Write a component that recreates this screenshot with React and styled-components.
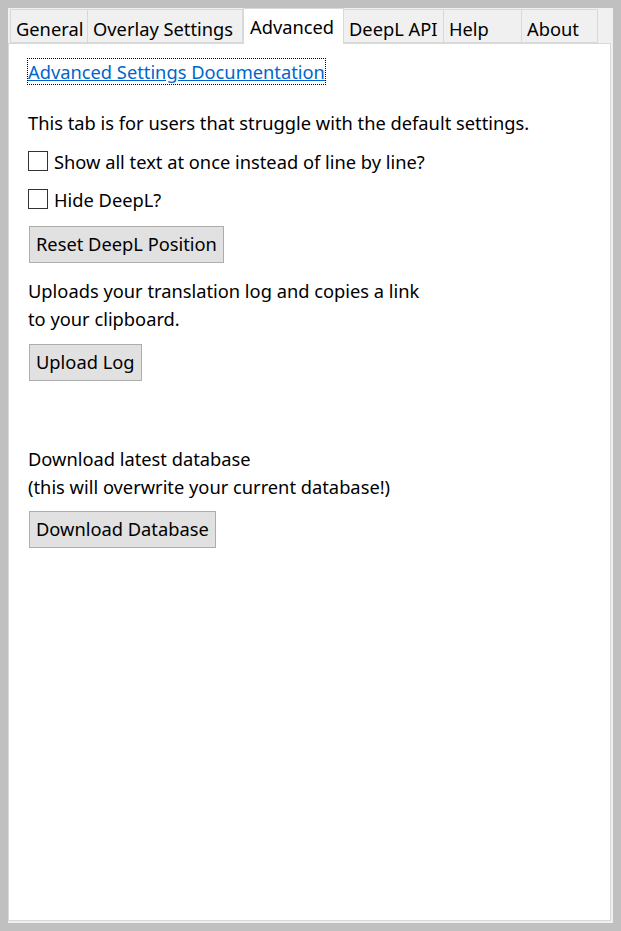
import React, { useState } from "react";
import styled, { createGlobalStyle } from "styled-components";

const GlobalStyle = createGlobalStyle`
  html, body {
    margin: 0;
    padding: 0;
    background: #c0c0c0;
  }
  body {
    font-family: "Noto Sans", "Open Sans", sans-serif;
  }
`;

const Frame = styled.div`
  width: 621px;
  height: 931px;
  box-sizing: border-box;
  padding: 8px;
  background: #c0c0c0;
`;

const Window = styled.div`
  height: 100%;
  background: #f0f0f0;
  display: flex;
  flex-direction: column;
  padding: 0 2px 2px 0;
  box-sizing: border-box;
`;

const TabBar = styled.div`
  display: flex;
  align-items: flex-end;
  height: 35px;
  padding-left: 2px;
`;

const Tab = styled.button`
  font-family: inherit;
  font-size: 18.3px;
  color: #000;
  height: ${(p) => (p.$active ? "36px" : "34px")};
  width: ${(p) => p.$w}px;
  margin-bottom: ${(p) => (p.$active ? "-1px" : "0")};
  background: ${(p) => (p.$active ? "#fff" : "#f0f0f0")};
  border: 1px solid #d9d9d9;
  border-bottom: ${(p) => (p.$active ? "none" : "1px solid #d9d9d9")};
  border-left: ${(p) => (p.$first || p.$active ? "1px solid #d9d9d9" : "none")};
  padding: ${(p) => (p.$active ? "0 0 1px 6px" : "4px 0 0 5px")};
  text-align: left;
  position: relative;
  z-index: ${(p) => (p.$active ? 1 : 0)};
  cursor: default;
`;

const Panel = styled.div`
  flex: 1;
  background: #fff;
  border: 1px solid #d9d9d9;
  padding: 15px 20px 0 19px;
  display: flex;
  flex-direction: column;
  align-items: flex-start;
`;

const DocLink = styled.a`
  font-size: 18.3px;
  color: #0066cc;
  text-decoration: underline;
  outline: 1px dotted #000;
  line-height: 25px;
`;

const Text = styled.p`
  margin: ${(p) => p.$mt || 0}px 0 0 0;
  font-size: 18.3px;
  line-height: 28.5px;
  color: #000;
`;

const CheckRow = styled.label`
  display: flex;
  align-items: center;
  gap: 6px;
  font-size: 18.3px;
  line-height: 28px;
  margin-top: ${(p) => p.$mt || 0}px;
`;

const Box = styled.span`
  width: 18px;
  height: 18px;
  border: 1px solid #333;
  background: #fff;
  display: inline-block;
  margin-top: -2px;
`;

const Button = styled.button`
  font-family: inherit;
  font-size: 18.3px;
  color: #000;
  background: #e1e1e1;
  border: 1px solid #adadad;
  height: 37px;
  padding: 0 6px 2px 6px;
  margin: ${(p) => p.$mt || 0}px 0 0 1px;
  cursor: default;
`;

const tabs = [
  { label: "General", w: 78 },
  { label: "Overlay Settings", w: 155 },
  { label: "Advanced", w: 101 },
  { label: "DeepL API", w: 100 },
  { label: "Help", w: 78 },
  { label: "About", w: 76 },
];

export default function App() {
  const [active, setActive] = useState("Advanced");
  return (
    <Frame>
      <GlobalStyle />
      <Window>
        <TabBar>
          {tabs.map((t, i) => (
            <Tab
              key={t.label}
              $w={t.w}
              $first={i === 0}
              $active={active === t.label}
              onClick={() => setActive(t.label)}
            >
              {t.label}
            </Tab>
          ))}
        </TabBar>
        <Panel>
          <DocLink href="#">Advanced Settings Documentation</DocLink>
          <Text $mt={25}>This tab is for users that struggle with the default settings.</Text>
          <CheckRow $mt={10}>
            <Box />
            Show all text at once instead of line by line?
          </CheckRow>
          <CheckRow $mt={10}>
            <Box />
            Hide DeepL?
          </CheckRow>
          <Button $mt={12}>Reset DeepL Position</Button>
          <Text $mt={14}>
            Uploads your translation log and copies a link
            <br />
            to your clipboard.
          </Text>
          <Button $mt={10}>Upload Log</Button>
          <Text $mt={64}>
            Download latest database
            <br />
            (this will overwrite your current database!)
          </Text>
          <Button $mt={9}>Download Database</Button>
        </Panel>
      </Window>
    </Frame>
  );
}
